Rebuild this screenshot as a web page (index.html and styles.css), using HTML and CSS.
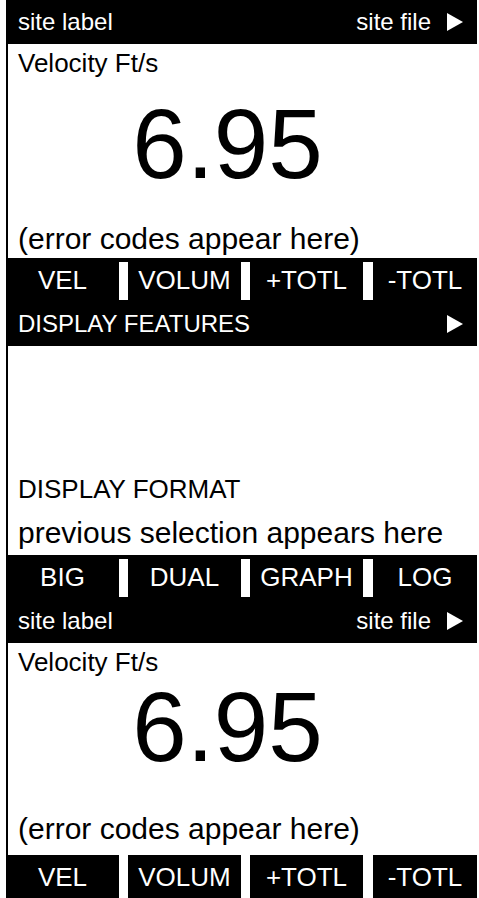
FILE: index.html
```html
<!DOCTYPE html>
<html lang="en">
<head>
    <meta charset="UTF-8">
    <title>Display Format Menu</title>
    <link rel="stylesheet" href="styles.css">
</head>
<body>
    <div class="panel">

        <!-- main screen -->
        <div class="bar head">
            <span>site label</span>
            <span class="right">site file
                <svg class="arrow" width="16" height="18" viewBox="0 0 16 18"><polygon points="0,0 16,9 0,18" fill="#fff"/></svg>
            </span>
        </div>
        <div class="screen">
            <div class="line">Velocity Ft/s</div>
            <div class="value">6.95</div>
            <div class="line note">(error codes appear here)</div>
        </div>
        <div class="tabs">
            <span class="tab">VEL</span><span class="sep"></span>
            <span class="tab">VOLUM</span><span class="sep"></span>
            <span class="tab">+TOTL</span><span class="sep"></span>
            <span class="tab">-TOTL</span>
        </div>

        <!-- display features menu -->
        <div class="bar">
            <span>DISPLAY FEATURES</span>
            <svg class="arrow" width="16" height="18" viewBox="0 0 16 18"><polygon points="0,0 16,9 0,18" fill="#fff"/></svg>
        </div>
        <div class="screen menu">
            <div class="line">DISPLAY FORMAT</div>
            <div class="line note">previous selection appears here</div>
        </div>
        <div class="tabs">
            <span class="tab">BIG</span><span class="sep"></span>
            <span class="tab">DUAL</span><span class="sep"></span>
            <span class="tab">GRAPH</span><span class="sep"></span>
            <span class="tab">LOG</span>
        </div>

        <!-- back to main screen -->
        <div class="bar head">
            <span>site label</span>
            <span class="right">site file
                <svg class="arrow" width="16" height="18" viewBox="0 0 16 18"><polygon points="0,0 16,9 0,18" fill="#fff"/></svg>
            </span>
        </div>
        <div class="screen last">
            <div class="line">Velocity Ft/s</div>
            <div class="value">6.95</div>
            <div class="line note">(error codes appear here)</div>
        </div>
        <div class="tabs flush">
            <span class="tab">VEL</span><span class="sep"></span>
            <span class="tab">VOLUM</span><span class="sep"></span>
            <span class="tab">+TOTL</span><span class="sep"></span>
            <span class="tab">-TOTL</span>
        </div>

    </div>
</body>
</html>
```

FILE: styles.css
```css
body {
    margin: 0;
    font-family: 'Liberation Sans', Arial, sans-serif;
    background: #fff;
    color: #000;
}

.panel {
    margin-left: 6px;
    width: 471px;
}

.bar {
    background: #000;
    color: #fff;
    height: 44px;
    font-size: 24px;
    padding: 0 12px;
    display: flex;
    align-items: center;
    justify-content: space-between;
}

.bar .right {
    display: flex;
    align-items: center;
    gap: 16px;
}

.arrow {
    display: block;
    margin-right: 2px;
}

.screen {
    border-left: 2px solid #000;
    padding-left: 10px;
}

.line {
    font-size: 26px;
    height: 38px;
    line-height: 38px;
    white-space: nowrap;
}

.line.note {
    font-size: 30px;
}

.value {
    font-size: 98px;
    line-height: 92px;
    height: 122px;
    padding-top: 16px;
    padding-right: 40px;
    text-align: center;
}

.menu {
    padding-top: 121px;
}

.menu .line {
    height: 44px;
    line-height: 44px;
}

.last .value {
    height: 129px;
    padding-top: 0;
}

.last .line:last-child {
    height: 45px;
}

.tabs {
    background: #000;
    color: #fff;
    height: 44px;
    display: flex;
    font-size: 26px;
}

.tab {
    flex: 0 0 113px;
    text-align: center;
    line-height: 44px;
}

.tab:last-child {
    flex: 1;
}

.sep {
    width: 9px;
    background: #fff;
    margin: 4px 0 2px;
}

.sep:nth-last-child(2) {
    width: 10px;
}

.tabs.flush .sep {
    margin: 0;
}
```
